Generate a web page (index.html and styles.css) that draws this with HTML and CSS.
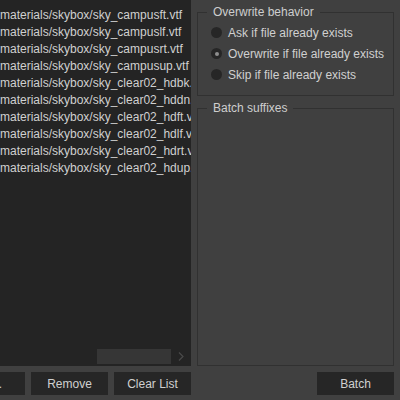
FILE: index.html
```html
<!DOCTYPE html>
<html>
<head>
<meta charset="utf-8">
<link rel="stylesheet" href="styles.css">
</head>
<body>
<div class="window">
  <div class="list">
    <div class="items">
      <div class="item">materials/skybox/sky_campusft.vtf</div>
      <div class="item">materials/skybox/sky_campuslf.vtf</div>
      <div class="item">materials/skybox/sky_campusrt.vtf</div>
      <div class="item">materials/skybox/sky_campusup.vtf</div>
      <div class="item">materials/skybox/sky_clear02_hdbk.vtf</div>
      <div class="item">materials/skybox/sky_clear02_hddn.vtf</div>
      <div class="item">materials/skybox/sky_clear02_hdft.vtf</div>
      <div class="item">materials/skybox/sky_clear02_hdlf.vtf</div>
      <div class="item">materials/skybox/sky_clear02_hdrt.vtf</div>
      <div class="item">materials/skybox/sky_clear02_hdup.vtf</div>
    </div>
    <div class="hscroll">
      <div class="track"><div class="handle"></div></div>
      <svg class="arrow" width="12" height="15" viewBox="0 0 12 15"><path d="M4 3.5 L8 7.5 L4 11.5" fill="none" stroke="#4a4a4a" stroke-width="1.2"/></svg>
    </div>
  </div>
  <div class="side">
    <fieldset class="group overwrite">
      <legend>Overwrite behavior</legend>
      <div class="radio"><span class="dot"></span><span>Ask if file already exists</span></div>
      <div class="radio checked"><span class="dot"></span><span>Overwrite if file already exists</span></div>
      <div class="radio"><span class="dot"></span><span>Skip if file already exists</span></div>
    </fieldset>
    <fieldset class="group suffixes">
      <legend>Batch suffixes</legend>
    </fieldset>
  </div>
  <div class="left-buttons">
    <button class="btn">Add...</button>
    <button class="btn">Remove</button>
    <button class="btn">Clear List</button>
  </div>
  <div class="right-buttons">
    <button class="btn">Batch</button>
  </div>
</div>
</body>
</html>
```

FILE: styles.css
```css
html, body {
  margin: 0;
  padding: 0;
  width: 400px;
  height: 400px;
  overflow: hidden;
  background: #404040;
  font-family: "Liberation Sans", Arial, sans-serif;
  font-size: 12px;
  color: #cecece;
}

.window {
  display: grid;
  grid-template-columns: 191px 1fr;
  grid-template-rows: 366px 23px;
  column-gap: 6px;
  row-gap: 6px;
  padding-right: 6px;
  width: 400px;
  box-sizing: border-box;
}

.list {
  background: #242424;
  display: flex;
  flex-direction: column;
  overflow: hidden;
}

.items {
  flex: 1;
  padding-top: 7px;
  overflow: hidden;
}

.item {
  height: 17px;
  line-height: 17px;
  white-space: nowrap;
  color: #d0d0d0;
}

.hscroll {
  height: 15px;
  margin-bottom: 2px;
  display: flex;
  align-items: center;
}

.track {
  flex: 1;
  height: 15px;
  display: flex;
  padding-left: 97px;
}

.handle {
  width: 74px;
  height: 15px;
  background: #363636;
}

.arrow {
  width: 12px;
  margin-right: 4px;
}

.side {
  display: flex;
  flex-direction: column;
  padding-top: 4px;
  min-width: 0;
}

.group {
  margin: 0;
  border: 1px solid #313131;
  padding: 2px 4px 10px 9px;
  min-width: 0;
}

.group legend {
  padding: 0 6px;
  line-height: 16px;
  color: #cecece;
  white-space: nowrap;
}

.suffixes {
  flex: 1;
  margin-top: 4px;
}

.radio {
  height: 21px;
  display: flex;
  align-items: center;
  padding-left: 4px;
  gap: 6px;
  white-space: nowrap;
  color: #d0d0d0;
}

.dot {
  flex: none;
  width: 11px;
  height: 11px;
  border-radius: 50%;
  background: #262626;
  display: flex;
  align-items: center;
  justify-content: center;
}

.radio.checked .dot::after {
  content: "";
  width: 4px;
  height: 4px;
  border-radius: 50%;
  background: #8e8e8e;
}

.left-buttons {
  display: flex;
  justify-content: flex-end;
  gap: 6px;
}

.right-buttons {
  display: flex;
  justify-content: flex-end;
}

.btn {
  flex: none;
  width: 77px;
  height: 23px;
  background: #262626;
  border: none;
  padding: 0;
  font-family: "Liberation Sans", Arial, sans-serif;
  font-size: 12px;
  color: #d0d0d0;
}
```
